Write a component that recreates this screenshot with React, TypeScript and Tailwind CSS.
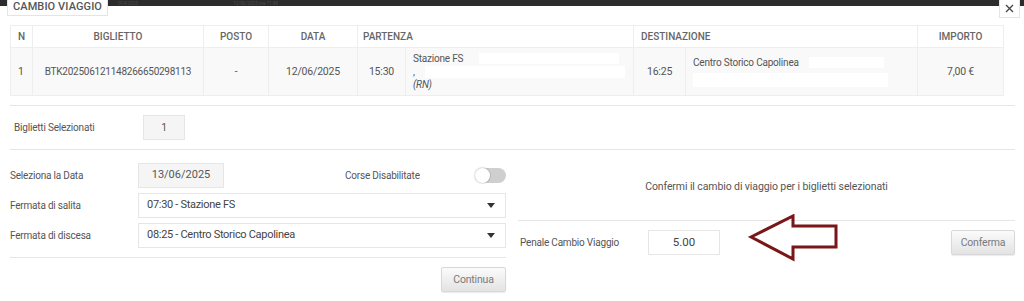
import React from 'react'

const cols = [22, 171, 65, 89, 48, 228, 52, 232, 86]

const Caret: React.FC = () => (
  <svg width="8" height="5" viewBox="0 0 8 5" className="shrink-0">
    <path d="M0 0 L8 0 L4 5 Z" fill="#333" />
  </svg>
)

const GreyButton: React.FC<{ label: string; className?: string }> = ({ label, className = '' }) => (
  <button
    className={`h-[25px] border border-[#d8d8d8] rounded-[2px] bg-gradient-to-b from-[#fbfbfb] to-[#e3e3e3] text-[10.5px] tracking-[-0.2px] text-[#7a7a7a] shadow-[0_1px_1px_rgba(0,0,0,0.08)] ${className}`}
  >
    {label}
  </button>
)

const App: React.FC = () => {
  return (
    <div className="relative w-[1024px] h-[301px] overflow-hidden bg-white font-['Roboto',sans-serif] text-[10px] tracking-[-0.2px] text-[#555]">
      {/* Top bar with tab + close */}
      <div className="relative h-[25px]">
        <div className="h-[6px] bg-[#2c2c2c] overflow-hidden flex items-end gap-[95px] pl-[118px] text-[5px] leading-[6px] text-[#4a4a4a]">
          <span>014/2025</span>
          <span>12/06/2025 ore 11:48</span>
        </div>
        <div className="absolute left-[7px] top-0 h-[16px] w-[101px] bg-white border border-t-0 border-[#e4e4e4] flex items-center justify-center text-[11px] tracking-[0.1px] font-medium text-[#555]">
          CAMBIO VIAGGIO
        </div>
        <div className="absolute left-[999px] top-0 h-[18px] w-[21px] bg-white border border-t-0 border-[#e4e4e4] flex items-center justify-center">
          <svg width="9" height="9" viewBox="0 0 9 9">
            <path d="M1 1 L8 8 M8 1 L1 8" stroke="#444" strokeWidth="1.3" />
          </svg>
        </div>
      </div>

      <div className="pl-[10px] pr-[9px]">
        {/* Tickets table */}
        <table className="w-[993px] table-fixed border-collapse">
          <colgroup>
            {cols.map((w, i) => (
              <col key={i} style={{ width: w }} />
            ))}
          </colgroup>
          <thead>
            <tr className="h-[22px] text-[10px] uppercase text-[#666] tracking-[0px]">
              <th className="border border-[#eeeeee] text-left pl-[7px] font-medium">N</th>
              <th className="border border-[#eeeeee] text-center font-medium">Biglietto</th>
              <th className="border border-[#eeeeee] text-center font-medium">Posto</th>
              <th className="border border-[#eeeeee] text-center font-medium">Data</th>
              <th colSpan={2} className="border border-[#eeeeee] text-left pl-[5px] font-medium">Partenza</th>
              <th colSpan={2} className="border border-[#eeeeee] text-left pl-[7px] font-medium">Destinazione</th>
              <th className="border border-[#eeeeee] text-center font-medium">Importo</th>
            </tr>
          </thead>
          <tbody>
            <tr className="h-[48px] bg-[#f9f9f9] text-[#555]">
              <td className="border border-[#eeeeee] pl-[7px] text-[10.5px]">1</td>
              <td className="border border-[#eeeeee] text-center text-[10px] tracking-[-0.25px]">BTK202506121148266650298113</td>
              <td className="border border-[#eeeeee] text-center">-</td>
              <td className="border border-[#eeeeee] text-center text-[10.5px]">12/06/2025</td>
              <td className="border border-[#eeeeee] text-center text-[10.5px]">15:30</td>
              <td className="border border-[#eeeeee] pl-[7px] align-top pt-[4px]">
                <div className="flex flex-col leading-[13px]">
                  <div className="flex items-center">
                    <span>Stazione FS</span>
                    <span className="ml-[16px] h-[11px] w-[140px] bg-white" />
                  </div>
                  <div className="flex items-center">
                    <span>,</span>
                    <span className="ml-[10px] h-[12px] w-[200px] bg-white" />
                  </div>
                  <div className="italic">(RN)</div>
                </div>
              </td>
              <td className="border border-[#eeeeee] text-center text-[10.5px]">16:25</td>
              <td className="border border-[#eeeeee] pl-[7px] align-top pt-[8px]">
                <div className="flex flex-col gap-[4px] leading-[13px]">
                  <div className="flex items-center">
                    <span>Centro Storico Capolinea</span>
                    <span className="ml-[10px] h-[11px] w-[75px] bg-white" />
                  </div>
                  <span className="h-[14px] w-[195px] bg-white" />
                </div>
              </td>
              <td className="border border-[#eeeeee] text-center text-[10.5px]">7,00 €</td>
            </tr>
          </tbody>
        </table>

        {/* Selected tickets */}
        <div className="mt-[9px] border-t border-[#e6e6e6] h-[44px] flex items-center pl-[4px]">
          <span className="w-[129px]">Biglietti Selezionati</span>
          <div className="h-[25px] w-[42px] bg-[#f5f5f5] border border-[#e6e6e6] flex items-center justify-center text-[10.5px]">
            1
          </div>
        </div>

        {/* Change form */}
        <div className="border-t border-[#e6e6e6] flex gap-[12px]">
          {/* Left column */}
          <div className="w-[496px] pt-[13px]">
            <div className="flex items-center h-[25px]">
              <span className="w-[128px]">Seleziona la Data</span>
              <div className="h-[25px] w-[86px] bg-[#f5f5f5] border border-[#e6e6e6] flex items-center justify-center text-[11px] tracking-[0px]">
                13/06/2025
              </div>
              <span className="ml-[121px]">Corse Disabilitate</span>
              <div className="ml-auto relative h-[15px] w-[31px] rounded-full bg-[#cfcfcf]">
                <div className="absolute left-0 top-0 h-[15px] w-[15px] rounded-full bg-white shadow-[0_0_1px_1px_rgba(0,0,0,0.12)]" />
              </div>
            </div>
            <div className="mt-[5px] flex items-center h-[25px]">
              <span className="w-[128px]">Fermata di salita</span>
              <div className="flex-1 h-[25px] bg-white border border-[#e6e6e6] flex items-center justify-between pl-[8px] pr-[10px] text-[11px] tracking-[-0.3px] text-[#444]">
                <span>07:30 - Stazione FS</span>
                <Caret />
              </div>
            </div>
            <div className="mt-[5px] flex items-center h-[25px]">
              <span className="w-[128px]">Fermata di discesa</span>
              <div className="flex-1 h-[25px] bg-white border border-[#e6e6e6] flex items-center justify-between pl-[8px] pr-[10px] text-[11px] tracking-[-0.3px] text-[#444]">
                <span>08:25 - Centro Storico Capolinea</span>
                <Caret />
              </div>
            </div>
            <div className="mt-[9px] border-t border-[#e6e6e6] pt-[9px] flex justify-end">
              <GreyButton label="Continua" className="w-[65px]" />
            </div>
          </div>

          {/* Right column */}
          <div className="relative flex-1">
            <div className="h-[70px] flex items-center justify-center pt-[3px] text-[10.5px] tracking-[-0.1px]">
              Confermi il cambio di viaggio per i biglietti selezionati
            </div>
            <div className="border-t border-[#e6e6e6] pt-[9px] flex items-center">
              <span className="w-[130px] pl-[2px]">Penale Cambio Viaggio</span>
              <div className="h-[25px] w-[72px] bg-white border border-[#e6e6e6] flex items-center justify-center text-[11.5px] tracking-[0px] text-[#444]">
                5.00
              </div>
              <GreyButton label="Conferma" className="ml-auto w-[64px]" />
            </div>
            {/* Annotation arrow */}
            <svg
              className="absolute left-[230px] top-[64px]"
              width="92"
              height="50"
              viewBox="0 0 92 50"
            >
              <path
                d="M3 23 L45 2 L45 12 L88 12 L88 33 L45 33 L45 45 Z"
                fill="none"
                stroke="#7a1518"
                strokeWidth="3"
                strokeLinejoin="miter"
              />
            </svg>
          </div>
        </div>
      </div>
    </div>
  )
}

export default App
